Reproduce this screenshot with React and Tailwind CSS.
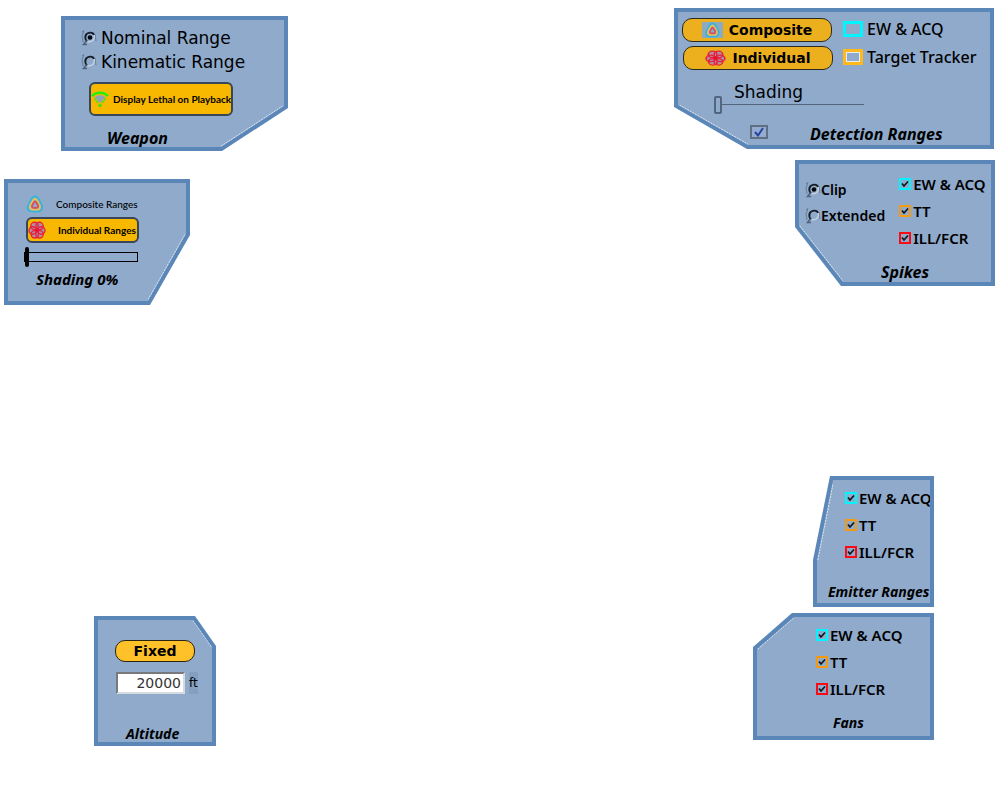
import React from "react";

function Panel({ title, place, outer, inner, edge, edgeLine, children }) {
  return (
    <section aria-label={title} className={`flex bg-[#5b87b8] p-1 ${place} ${outer}`}>
      <div className={`relative min-w-0 flex-1 bg-[#8faacb] ${inner}`}>
        {children}
        <svg aria-hidden="true" className={`pointer-events-none absolute ${edge}`} viewBox="0 0 100 100" preserveAspectRatio="none">
          <line {...edgeLine} stroke="#dfe9f4" strokeWidth="1" strokeDasharray="2 1" vectorEffect="non-scaling-stroke" />
        </svg>
      </div>
    </section>
  );
}

const RISING = { x1: 0, y1: 98, x2: 98, y2: 0 };
const FALLING = { x1: 2, y1: 0, x2: 100, y2: 98 };

function Title({ className = "", children }) {
  return <h2 className={`font-['Noto_Sans',sans-serif] font-bold italic whitespace-nowrap ${className}`}>{children}</h2>;
}

function Radio({ name, label, defaultChecked, className = "" }) {
  return (
    <label className={`flex items-center whitespace-nowrap ${className}`}>
      <span className="relative h-4 w-4 shrink-0">
        <input type="radio" name={name} defaultChecked={defaultChecked} className="peer absolute inset-0 m-0 h-4 w-4 opacity-0" />
        <svg viewBox="0 0 16 16" className="pointer-events-none h-4 w-4" fill="none">
          <path d="M1 1L3 3M3 0L1 6L2 12M14 4L15 11" stroke="#667d9a" strokeWidth="1" />
          <path d="M6 11.500C3 8 4 3 9 2.6C11 2.5 12.600 3.600 13 5" stroke="#161e28" strokeWidth="1.900" />
          <path d="M13 5C14.500 9 11 13 6.500 11.500" stroke="#c3d0e0" strokeWidth="1.500" />
          <path d="M5.500 10.500L2.500 14.500H6" stroke="#4f627b" strokeWidth="1.500" />
        </svg>
        <svg viewBox="0 0 16 16" className="pointer-events-none absolute inset-0 hidden h-4 w-4 peer-checked:block" fill="none">
          <circle cx="9" cy="7.500" r="2.300" fill="#05080c" />
        </svg>
      </span>
      {label}
    </label>
  );
}

function Tick({ label, color }) {
  return (
    <label className="flex h-4 items-center gap-0.5 whitespace-nowrap">
      <span className={`relative h-3 w-3 shrink-0 border-2 ${color}`}>
        <input type="checkbox" defaultChecked className="peer absolute inset-0 m-0 h-2 w-2 opacity-0" />
        <svg viewBox="0 0 8 8" className="pointer-events-none invisible h-2 w-2 peer-checked:visible" fill="none">
          <path d="M1 3.500L3 6L7 1.500" stroke="#10151c" strokeWidth="1.700" />
        </svg>
      </span>
      {label}
    </label>
  );
}

function Bands({ className = "" }) {
  return (
    <div className={`flex flex-col gap-[11px] font-['Noto_Sans',sans-serif] text-[15px] leading-4 font-semibold ${className}`}>
      <Tick label="EW & ACQ" color="border-[#00f6ff]" />
      <Tick label="TT" color="border-[#f39a12]" />
      <Tick label="ILL/FCR" color="border-[#fa0a12]" />
    </div>
  );
}

function CompositeIcon({ className }) {
  return (
    <svg viewBox="0 0 18 18" className={className} fill="none" aria-hidden="true">
      <path d="M9 1.500C12 1.500 12.500 4 14 7C16 10 17 12 15.500 14.500C14 17 11 16.500 9 16.500C6 16.500 3.500 17 2 14.500C0.800 12 2.500 9.500 4 7C5.500 4 6 1.500 9 1.500Z" stroke="#35b5dc" strokeWidth="2" />
      <path d="M9 3.800C11 4 11.500 6.500 13 9C14.300 11 14.300 14 12 14.500H6C3.500 14.300 3.500 11.500 5 9C6.500 6.500 7 4 9 3.800Z" stroke="#e5c15a" strokeWidth="2" />
      <path d="M9 6.300C10.300 6.500 10.700 8 11.700 9.700C12.800 11.500 12 12.700 10.500 12.800H7.500C5.800 12.600 5.400 11.300 6.500 9.700C7.500 8 8 6.500 9 6.300Z" stroke="#dc4c5f" strokeWidth="1.800" />
    </svg>
  );
}

function IndividualIcon({ className }) {
  return (
    <svg viewBox="0 0 18 18" className={className} fill="none" aria-hidden="true" preserveAspectRatio="none">
      <g fill="#b08ca6">
        <circle cx="9" cy="9" r="7.500" />
      </g>
      <g stroke="#e8203c" strokeWidth="1.400">
        <circle cx="6.500" cy="5" r="3.700" />
        <circle cx="11.500" cy="5" r="3.700" />
        <circle cx="4.700" cy="9.500" r="3.700" />
        <circle cx="13.300" cy="9.500" r="3.700" />
        <circle cx="6.800" cy="13.300" r="3.700" />
        <circle cx="11.500" cy="13.300" r="3.700" />
      </g>
      <circle cx="9" cy="9.200" r="1.800" fill="#ee1028" />
    </svg>
  );
}

function SignalIcon() {
  return (
    <svg viewBox="0 0 18 18" className="h-[18px] w-[18px] shrink-0" fill="none" aria-hidden="true">
      <path d="M3.500 7C7 4.500 11 4.500 14.500 7L9.800 12.500H8.200Z" fill="#8ea5b5" />
      <path d="M1 6C5 1.500 13 1.500 17 6" stroke="#22f000" strokeWidth="2.500" />
      <path d="M3.500 8.500L7.500 13.500M14.500 8.500L10.500 13.500" stroke="#4be31a" strokeWidth="2" strokeDasharray="2 1" />
      <path d="M7.500 15.500H10.500" stroke="#22e600" strokeWidth="2.500" />
    </svg>
  );
}

function Swatch({ label, color }) {
  return (
    <label className="flex items-center gap-1 whitespace-nowrap">
      <input type="checkbox" className={`m-0 h-4 w-5 shrink-0 appearance-none ${color}`} />
      {label}
    </label>
  );
}

export default function App() {
  return (
    <main className="flex min-h-screen items-start justify-between bg-white font-['DejaVu_Sans',sans-serif] text-black">
      <div className="flex flex-col items-start pt-4 pl-1">
        <Panel
          title="Weapon"
          place="ml-[57px] h-[135px] w-[227px]"
          outer="[clip-path:polygon(0_0,100%_0,100%_calc(100%-43px),calc(100%-66px)_100%,0_100%)]"
          inner="[clip-path:polygon(0_0,100%_0,100%_calc(100%-41px),calc(100%-63px)_100%,0_100%)]"
          edge="right-0 bottom-0 h-[41px] w-[63px]"
          edgeLine={RISING}
        >
          <div className="flex flex-col items-start pt-1.5 pl-4 text-[17px] leading-6">
            <Radio name="range" label="Nominal Range" defaultChecked className="gap-1" />
            <Radio name="range" label="Kinematic Range" className="gap-1" />
            <button type="button" className="mt-2 ml-2 flex h-[34px] w-[144px] items-center gap-1 rounded-md border-2 border-[#38465a] bg-[#f8b800] font-['Lato',sans-serif] text-[10px] font-bold whitespace-nowrap">
              <SignalIcon />
              Display Lethal on Playback
            </button>
            <Title className="mt-2.5 ml-[26px] text-[16px] leading-6">Weapon</Title>
          </div>
        </Panel>

        <Panel
          title="Shading"
          place="mt-7 h-[126px] w-[186px]"
          outer="[clip-path:polygon(0_0,100%_0,100%_calc(100%-70px),calc(100%-40px)_100%,0_100%)]"
          inner="[clip-path:polygon(0_0,100%_0,100%_calc(100%-67px),calc(100%-38px)_100%,0_100%)]"
          edge="right-0 bottom-0 h-[67px] w-[38px]"
          edgeLine={RISING}
        >
          <div className="flex flex-col items-start pt-2 pl-4 font-['Lato',sans-serif] text-[10px]">
            <button type="button" className="ml-0.5 flex h-[26px] items-center gap-3 font-medium whitespace-nowrap">
              <CompositeIcon className="h-[18px] w-[18px]" />
              Composite Ranges
            </button>
            <button type="button" className="ml-0.5 flex h-[26px] w-[113px] items-center gap-3 rounded-md border-2 border-[#38465a] bg-[#f8b800] font-bold whitespace-nowrap">
              <IndividualIcon className="h-[18px] w-[18px] shrink-0" />
              Individual Ranges
            </button>
            <input
              type="range"
              aria-label="Shading percentage"
              defaultValue="0"
              className="mt-0.5 h-6 w-[114px] appearance-none bg-transparent [&::-webkit-slider-runnable-track]:h-2.5 [&::-webkit-slider-runnable-track]:border [&::-webkit-slider-runnable-track]:border-black [&::-webkit-slider-thumb]:-mt-1.5 [&::-webkit-slider-thumb]:h-5 [&::-webkit-slider-thumb]:w-1 [&::-webkit-slider-thumb]:appearance-none [&::-webkit-slider-thumb]:rounded-xs [&::-webkit-slider-thumb]:bg-black"
            />
            <Title className="ml-3 text-[15px] leading-5">Shading 0%</Title>
          </div>
        </Panel>

        <Panel
          title="Altitude"
          place="mt-[311px] ml-[90px] h-[130px] w-[122px]"
          outer="[clip-path:polygon(0_0,calc(100%-21px)_0,100%_30px,100%_100%,0_100%)]"
          inner="[clip-path:polygon(0_0,calc(100%-19px)_0,100%_27px,100%_100%,0_100%)]"
          edge="top-0 right-0 h-[27px] w-[19px]"
          edgeLine={{ x1: 0, y1: 2, x2: 98, y2: 100 }}
        >
          <div className="flex flex-col items-start pt-5 pl-4">
            <button type="button" className="ml-px h-[22px] w-20 rounded-[10px] border border-[#2b2410] bg-[#ffc12a] text-[14px] leading-5 font-bold">Fixed</button>
            <label className="mt-2.5 ml-0.5 flex items-center gap-1 text-[12px]">
              <input type="text" aria-label="Altitude in feet" defaultValue="20000" className="h-[22px] w-[69px] border-2 border-t-[#77797c] border-r-[#d5dae0] border-b-[#d5dae0] border-l-[#77797c] bg-white pr-0.5 text-right text-[14px] text-[#333]" />
              <span className="bg-[#859fc1] py-0.5">ft</span>
            </label>
            <Title className="mt-[30px] ml-3 text-[14px] leading-5">Altitude</Title>
          </div>
        </Panel>
      </div>

      <div className="flex flex-col items-end pt-2 pr-[5px]">
        <Panel
          title="Detection Ranges"
          place="mr-px h-[141px] w-[320px]"
          outer="[clip-path:polygon(0_0,100%_0,100%_100%,73px_100%,0_calc(100%-42px))]"
          inner="[clip-path:polygon(0_0,100%_0,100%_100%,70px_100%,0_calc(100%-40px))]"
          edge="bottom-0 left-0 h-[40px] w-[70px]"
          edgeLine={FALLING}
        >
          <div className="flex flex-col pt-1.5">
            <div className="flex gap-2.5 pl-1">
              <div className="flex flex-col gap-1">
                <button type="button" className="flex h-6 w-[150px] items-center justify-center gap-1.5 rounded-[10px] border border-[#2a2a20] bg-[#ecb01f] text-[14px] font-bold">
                  <CompositeIcon className="h-4 w-[21px] bg-[#8cabc0]" />
                  Composite
                </button>
                <button type="button" className="ml-px flex h-6 w-[150px] items-center justify-center gap-1.5 rounded-[10px] border border-[#2a2a20] bg-[#ecb01f] text-[14px] font-bold">
                  <IndividualIcon className="h-4 w-[21px]" />
                  Individual
                </button>
              </div>
              <div className="flex flex-col gap-3 pt-[3px] font-['Noto_Sans',sans-serif] text-[16px] leading-4 font-medium">
                <Swatch label="EW & ACQ" color="border-3 border-[#00f6ff]" />
                <Swatch label="Target Tracker" color="border-3 border-[#ffb91d] outline -outline-offset-4 outline-white/80" />
              </div>
            </div>
            <label className="mt-3 ml-9 flex w-[150px] flex-col">
              <span className="pl-5 text-[17px] leading-5">Shading</span>
              <input
                type="range"
                defaultValue="0"
                className="-mt-2 h-5 w-full appearance-none bg-transparent [&::-webkit-slider-runnable-track]:h-px [&::-webkit-slider-runnable-track]:bg-[#52677f] [&::-webkit-slider-thumb]:-mt-2 [&::-webkit-slider-thumb]:h-[18px] [&::-webkit-slider-thumb]:w-2 [&::-webkit-slider-thumb]:appearance-none [&::-webkit-slider-thumb]:rounded-xs [&::-webkit-slider-thumb]:border-2 [&::-webkit-slider-thumb]:border-[#52677f] [&::-webkit-slider-thumb]:bg-[#8faacb]"
              />
            </label>
            <label className="mt-2 ml-[72px] flex items-center gap-[42px]">
              <span className="relative mb-1 h-3.5 w-[18px] border-2 border-[#5f7083] bg-[#94acd0]">
                <input type="checkbox" defaultChecked className="peer absolute inset-0 m-0 opacity-0" />
                <svg viewBox="0 0 14 10" className="pointer-events-none invisible h-2.5 w-3.5 peer-checked:visible" fill="none" aria-hidden="true">
                  <path d="M3 5L6 8.500L11 1" stroke="#2645a0" strokeWidth="2" />
                </svg>
              </span>
              <Title className="text-[16px] leading-6">Detection Ranges</Title>
            </label>
          </div>
        </Panel>

        <Panel
          title="Spikes"
          place="mt-[11px] h-[126px] w-[200px]"
          outer="[clip-path:polygon(0_0,100%_0,100%_100%,46px_100%,0_calc(100%-59px))]"
          inner="[clip-path:polygon(0_0,100%_0,100%_100%,44px_100%,0_calc(100%-56px))]"
          edge="bottom-0 left-0 h-[56px] w-[44px]"
          edgeLine={FALLING}
        >
          <div className="flex gap-3.5 pt-3 pl-1.5">
            <div className="flex flex-col gap-2.5 pt-1.5 font-['Noto_Sans',sans-serif] text-[14px] leading-4 font-semibold">
              <Radio name="spikes" label="Clip" defaultChecked />
              <Radio name="spikes" label="Extended" />
            </div>
            <Bands />
          </div>
          <Title className="mt-3.5 ml-[82px] text-[16px] leading-6">Spikes</Title>
        </Panel>

        <Panel
          title="Emitter Ranges"
          place="mt-[190px] mr-[61px] h-[131px] w-[121px]"
          outer="[clip-path:polygon(17px_0,100%_0,100%_100%,0_100%,0_84px)]"
          inner="[clip-path:polygon(16px_0,100%_0,100%_100%,0_100%,0_80px)]"
          edge="top-0 left-0 h-[80px] w-[16px]"
          edgeLine={{ x1: 5, y1: 100, x2: 100, y2: 5 }}
        >
          <Bands className="pt-2.5 pl-7" />
          <Title className="mt-[22px] ml-[11px] text-[14px] leading-5">Emitter Ranges</Title>
        </Panel>

        <Panel
          title="Fans"
          place="mt-1.5 mr-[61px] h-[127px] w-[181px]"
          outer="[clip-path:polygon(39px_0,100%_0,100%_100%,0_100%,0_34px)]"
          inner="[clip-path:polygon(37px_0,100%_0,100%_100%,0_100%,0_32px)]"
          edge="top-0 left-0 h-[32px] w-[37px]"
          edgeLine={{ x1: 2, y1: 100, x2: 100, y2: 2 }}
        >
          <Bands className="pt-2.5 pl-[59px]" />
          <Title className="mt-4 ml-[76px] text-[14px] leading-5">Fans</Title>
        </Panel>
      </div>
    </main>
  );
}
